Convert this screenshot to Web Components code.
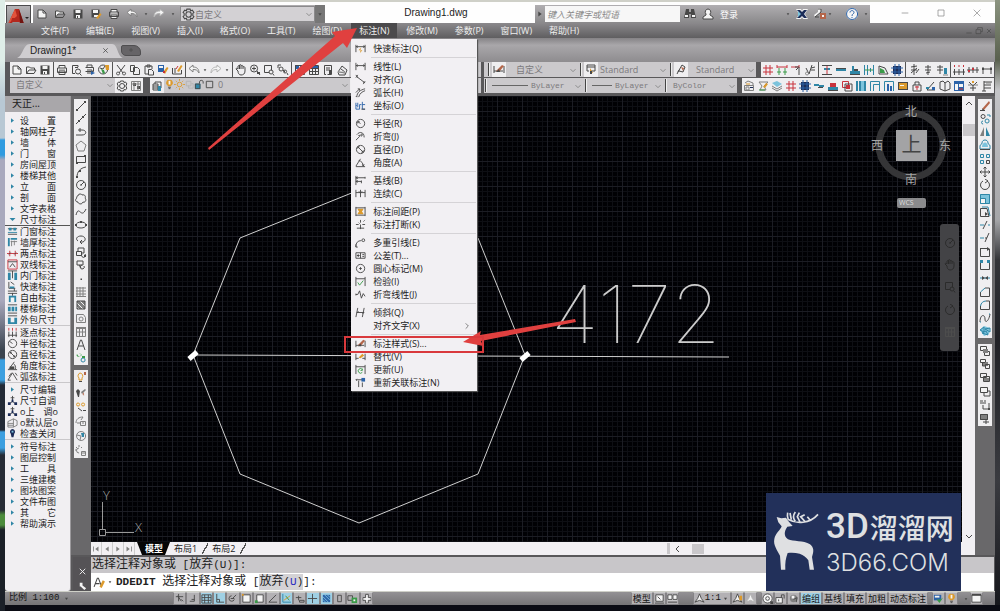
<!DOCTYPE html>
<html lang="zh-CN">
<head>
<meta charset="utf-8">
<title>Drawing1.dwg</title>
<style>
html,body{margin:0;height:100%;overflow:hidden}
body{font:9px/13px "Open Sans","Noto Sans CJK SC",sans-serif;color:#222;background:#0b0c14}
</style>
</head>
<body>
<cad-app></cad-app>
<script>
const COL={k:'#484848',g:'#808080',l:'#b4b4b4',b:'#2b62a8',t:'#2f86a6',c:'#7cc3dc',r:'#c8323c',y:'#dc9a2c',w:'#f4f4f4',n:'#3a9a48',d:'#1c2c58',o:'#b4664a'};
/* Icon parts: "<colour letter><! when filled> path", separated by ";" on a 12x12 grid */
const I={
new:'w!M2 2h5l3 3v5H2z;kM2 2h5l3 3v5H2zM7 2v3h3',
open:'w!M1 3h4l1 1h3v2H4L2 10H1z;kM1.5 9.500V3h3l1 1h4v2M1.500 9.500L4 6h7L9 9.500z',
save:'k!M1.500 1.500h9v9h-9z;w!M3.500 2h5v3h-5zM4 7h4v3H4z;k!M5 8h1v2H5z',
saveas:'k!M1.500 1.500h8v8h-8z;w!M3 2h5v3H3zM4 7h4v2H4z;y!M6 10l4-5 1.500 1.500L8 11z',
print:'w!M3 1h6v9H3z;kM3 4V1.500h6V4M1.500 4h9v4.500h-9zM3 7h6v3.500H3z;gM3 6h6',
preview:'kM8 3V1.500H2.500v8H5M5 3.500h3;kM8 5a2.500 2.500 0 1 1 0 5a2.500 2.500 0 1 1 0-5M10 10l1.500 1.500',
plot:'kM3 3V1h5v2M1.500 3.500h8v4h-8M3 6h5v3H3;b!M7 7l4 2-4 2z',
globe:'kM5 1a4.500 4.500 0 1 0 .1 9a4.500 4.500 0 1 0 0-9M2 4l3 1 2-3;n!M3 5l3 1 1 3-2 1z;y!M7 1h4v5H8z',
cut:'kM2 1l6 8M10 1L4 9M3 8a1.500 1.500 0 1 0 .1 0M9 8a1.500 1.500 0 1 0 .1 0',
copy:'w!M1 1h6v7H1z;kM1.500 1.500h4v6h-4zM4.500 3.500h4l2 2v5h-6z',
paste:'kM2 2h7v3M2 2v8h3M4 1h3v2H4z;kM5.500 5.500h3l2 2v3.500h-5z',
match:'b!M1 1h6v7H1z;w!M2 2h4v2H2z;y!M6 8l4-5 1.500 1L8 10z;r!M6 7h2v2H6z',
edit:'kM1.500 4v6h9V6M4 4v5;y!M6 7l4-6 1.500 1L8 8z;rM5 5l2-3',
undo:'w!M1 4.500L5 1v2c4 0 6 2 6 6-1.500-3-3-3.500-6-3.500V8z;gM1 4.500L5 1v2c4 0 6 2 6 6-1.500-3-3-3.500-6-3.500V8z',
redo:'w!M11 4.500L7 1v2C3 3 1 5 1 9c1.500-3 3-3.500 6-3.500V8z;lM11 4.500L7 1v2C3 3 1 5 1 9c1.500-3 3-3.500 6-3.500V8z',
caret:'k!M4 5h4L6 8z',
pan:'kM3 7L1 5c0-1 1-1 2 0V2c1-1 1.500 0 1.500 0V1C6 0 6 1 6 2c1-1 2-1 2 1 1-1 2 0 2 1v3c0 3-2 4-4 4S3 9 3 7zM4.500 2v3M6 2v3M8 3v2',
zoom:'kM5 1a3.500 3.500 0 1 0 .1 7a3.500 3.500 0 1 0 0-7M8 7l3 4M3 4.500h4M5 2.500v4;k!M8 8h3v2H8z',
zoomw:'kM1.500 1.500h7v5M1.500 1.500v7H6M8 6a2 2 0 1 0 .1 4a2 2 0 1 0 0-4M10 10l1 1.500',
zoomp:'kM4 3a2 2 0 1 0 .1 4a2 2 0 1 0 0-4M6 6l2 2M1 1h3M1 1v3M8 6a1.500 1.500 0 1 0 .1 3a1.500 1.500 0 1 0 0-3M10 9l1 2',
prop:'b!M1 1h4v4H1z;kM1.500 1.500h9v9h-9zM5 5h5M5 7.500h5M3 7.500h1;b!M6 2h4v2H6z',
grid:'kM1.500 1.500h9v9h-9zM1.500 4.500h9M1.500 7.500h9M4.500 1.500v9M7.500 1.500v9;b!M2 2h8v2H2z',
tool:'kM2.500 1.500h7v9h-4M2.500 1.500v9H4M4 4h4M4 6h4;k!M7 6h2v4H7z',
calc:'kM2 8l4-6 5 4-2 5H3zM3 8l6 1M5 5l4 3;lM2 8h7',
gear:'kM6 3.500a2.500 2.500 0 1 0 .1 5a2.500 2.500 0 1 0 0-5M4.500 1h3l.5 1.500L9.500 2 11 4 10 5v2l1 1-1.500 2-1.500-.5-.5 1.500h-3L4 9.500 2.500 10 1 8l1-1V5L1 4l1.500-2 1.500.5z',
ws:'k!M3 3h3v3H3zM7 6h3v3H7z;gM1.500 1.500h9v9h-9zM1 4h10M4 1v10M8 1v10',
layers:'kM2 4h5v6H2zM2 6h5M2 8h5M4 4V2h6v6H7;t!M7 6h3v5H7z',
bulb:'y!M6 1a3.200 3.200 0 0 0-2 6v1h4V7a3.200 3.200 0 0 0-2-6z;w!M5 2h2v4H5z;kM4.500 9h3M5 10.500h2',
sun:'yM6 3.500a2.500 2.500 0 1 0 .1 5a2.500 2.500 0 1 0 0-5M6 0v2M6 10v2M0 6h2M10 6h2M2 2l1 1M9 9l1 1M10 2L9 3M2 10l1-1',
vp:'lM2.500 2.500h5v5h-5zM5 7v3h5V5H8',
lock:'t!M1 5h6v6H1z;kM1.500 5.500h5v5h-5zM6 5V3c0-2 4-2 4 0v2',
sq:'kM2.500 2.500h7v7h-7z',
dimst:'kM1 3v7M11 3v7M1 8h9;o!M3 8L9 2l2 1-5 6z;k!M3 9l3-3 1 3z',
tblst:'kM2 2h8v6H6M2 2v6h2M2 4h8;y!M5 5l3 5H5z;k!M5 8h2v3H5z',
mlst:'kM3 9L7 2l3 2-2 5-4-1M2 11l2-4;o!M6 4l3 1-1 3z',
hashr:'rM4 1v10M8 1v10M1 4h10M1 8h10',
col2:'rM1 3h10M1 1v3M11 1v3;nM3 4v7M9 4v7M1 8h4M7 8h4',
tee:'rM1 3h8M9 1v3;kM5 3h4v8M6 6l2-2',
vee:'kM2 4l3 6M8 1L5 10M7 6h4M7 4l4-1;gM3 8a1.500 1.500 0 1 0 .1 0',
ibeam:'k!M1 1h10v1H1zM1 10h10v1H1z;t!M3 4h6v2H3z;rM6 2v8',
dash:'t!M1 5h10v2H1z;kM1 4.500h10',
wall1:'t!M1 7h10v3H1zM3 2h2v5H3z;k!M1 10h10v1H1zM5 5h4v2H5z',
win1:'tM1.500 1v10M10.500 1v10M4.500 1v10M7.500 4v4;nM2 6h8',
door:'kM2 2v8h9L8 4 2 2;n!M3 4l4 2 1 3H3z',
pillar:'d!M2 2h8v8H2z;bM4 0v12M8 0v12M0 4h12M0 8h12',
dimk:'kM6 0v11M3 3l6-1M3 6h6M3 9L9 4M8 9l3-4',
dimk2:'kM6 1v10M3 3h6M3 6h6M4 9l4-1',
dimk3:'kM4 1v9M1 3h6M1 6h6;t!M8 4h3v6H8z;gM7 11h5',
pts:'kM1.500 5v6M6 5v6M10.500 5v6M0 8h12;rM1.500 1v2M6 1v2M10.500 1v2',
pt2:'kM2 3v6M6 3v6M10 3v6M0 6h12;r!M5 4h2v2H5zM1 6h2v2H1z',
pt3:'kM2 3v7M10 3v7M2 5h8;k!M1 4h2v2H1zM9 4h2v2H9z',
a1:'gM2 3l3-2 5 2v3M1.500 5.500h9v5h-9zM3 7h3v3H3z;d!M7 7h3v1H7z;yM3 4h4',
a2:'gM2 2l3 4-2 4h6l-2-4 4-4z;y!M6 7l3-4 2 1-3 4z;nM2 10h6',
a3:'c!M1 3l5-2 5 3-5 3z;gM1 6l5 3 5-3M1 8l5 3 5-3',
a4:'t!M1 4h5v2H1zM6 5h5v2H6z;k!M5 7h5v1H5z',
a5:'r!M3 3h6v4H3z;t!M1 7h10v3H1z;k!M1 10h10v1H1z',
a6:'rM1.500 1.500h6v6h-6z;kM4 4h7v7H4z;r!M5 5h4v4H5z',
a7:'t!M1 1h2v10H1zM4 1h2v10H4zM9 1h2v10H9z;c!M6 1h3v10H6z',
a8:'tM1.500 11V1.500h9V11M4.500 11V4.500h6',
a9:'tM1.500 11V1.500h9V11;b!M4 4h2v7H4zM7 6h2v5H7z',
a10:'k!M1 2h10v8H1z;y!M2 3h8v6H2z;w!M3 5h4v1H3z',
a11:'kM2 5h8v6H2zM4 5V2h4v3;rM4 7h4M6 6v4',
a12:'kM2 10L9 2M2 10h8;b!M7 7h3v3H7z;t!M1 7h3v2H1z',
a13:'kM1 2l3-1 2 2v8L1 9zM6 3l3-2 2 2v6l-5 2',
a14:'b!M1 1h10v10H1z;w!M2 4h3v6H2zM6 4h4v3H6z;rM6 9h4',
a15:'kM2 2l4 4 4-4M6 5v6M3 8h6;gM1 5h10;y!M5 1h2v2H5z',
a16:'kM3 1v10M3 2h8M3 5h7M3 8h7M1 11h4;gM5 3h5',
line:'kM2 10L10 2;k!M1 9h2v2H1zM9 1h2v2H9z',
xline:'kM1 11L11 1;k!M3 7h2v2H3zM7 3h2v2H7z',
pline:'kM1 9h6c5 0 5-5 0-5H3M5 2v4',
poly:'gM6 1l5 4-2 6H3L1 5z',
rect:'kM1.500 3.500h9v6h-9z;k!M1 9h2v2H1zM9 2h2v2H9z',
arc:'kM2 11C2 6 5 2 11 1;k!M1 10h2v2H1zM4 4h2v2H4z',
circ:'kM6 1.500a4.500 4.500 0 1 0 .1 9a4.500 4.500 0 1 0 0-9M6 6l3-3M5 6h2',
cloud:'kM3 3c0-3 4-2 4-1 3-1 4 2 3 3 2 2 0 5-2 4-1 3-5 2-5 0-3 0-3-3-1-4-1-1 0-2 1-2z',
spl:'kM1 9C4-2 6 14 11 3',
ell:'kM6 3a5 3 0 1 0 .1 6a5 3 0 1 0 0-6;k!M5 2h2v2H5zM0 5h2v2H0zM10 5h2v2h-2z',
earc:'kM3 8c-3-2-1-5 3-5s6 4 2 6H5M7 7L5 9l2 2',
blk:'kM3 5V2h6v5H7M1.500 5.500h5v4h-5zM7 8a2 2 0 1 0 3 0;k!M9 9h2v2H9z',
blk2:'kM2 2h6v4H2zM7 6a2 2 0 1 0 2 1M4 6l2 3',
dot:'k!M5.500 5.500h1.500v1.500H5.500z',
hat:'gM1 2h10M1 5h10M1 8h10M2 1v10M5 1v10M8 1v10M1 10.500h10',
hat2:'g!M2 2h8v8H2z;wM1 3l8 8M4 1l7 7M1 7l4 4;kM2 2h8v8H2z',
reg:'gM1.500 2.500h7l2 3v5h-9zM6 5a2 2 0 1 0 .1 4a2 2 0 1 0 0-4',
tab:'gM1.500 1.500h9v9h-9zM1.500 6h9M4.500 3v8M7.500 3v8;g!M1 1h10v2H1z',
txt:'kM2 11L5.500 1h1L10 11M3.500 7h5',
adds:'n!M2 2a2 2 0 1 0 2-1l3 2-3 2z;tM8 6a2 2 0 1 0 .1 4a2 2 0 1 0 0-4;n!M7 4h3v2H7z',
li1:'yM5 2a3 3 0 0 0-1 5v2h3V7a3 3 0 0 0-2-5z;kM4 10.500h3;o!M9 1h2v3H9z',
li2:'k!M3 3l2 2-1 6H3L1 5z;g!M6 6l4-3 1 1-4 4z;oM9 7a1 1 0 1 0 .1 2',
li3:'yM3 2a1.500 1.500 0 1 0 .1 3a1.500 1.500 0 1 0 0-3M8 2a1.500 1.500 0 1 0 .1 3a1.500 1.500 0 1 0 0-3;kM3 7l4 3;k!M8 9h3v1H8z',
li4:'gM1 8c0-4 3-6 7-6L6 5M5.500 6.500h5v4h-5zM7 8h2M2 8h3',
li5:'gM6 1.500a4.500 4.500 0 1 0 .1 9a4.500 4.500 0 1 0 0-9;t!M6 3h3v4H7z;gM2 5l4 1-1 4',
li6:'gM4 3a2 2 0 1 0 .1 5M4 0v2M0 5h2M1 2l1 1M7 2L6 3M6.500 6.500h4v4h-4zM7 8h3',
erase:'o!M3 9L10 1l1 2-6 7z;kM1 10.500h5M3 9l2 1',
cpy2:'kM4 1.500a2 2 0 1 0 .1 4a2 2 0 1 0 0-4;tM8 6a2 2 0 1 0 .1 4a2 2 0 1 0 0-4M4 8a1.500 1.500 0 1 0 .1 3M8 2h3v2',
mir:'g!M5 1v9H1z;t!M7 1v9h4z',
offs:'tM1 10V7c0-2 2-1 2-3 0-4 6-4 6 0 0 2 2 1 2 3v3z;c!M3 8c0-6 6-6 6 0z;kM1 10.500h10',
arr:'tM1.500 1.500h3v3h-3zM7.500 1.500h3v3h-3zM1.500 7.500h3v3h-3z;kM7.500 7.500h3v3h-3z',
mov:'kM6 1v10M1 6h10M4.500 2.500L6 1l1.500 1.500M4.500 9.500L6 11l1.500-1.500M2.500 4.500L1 6l1.500 1.500M9.500 4.500L11 6 9.500 7.500',
rot:'kM8 2a4.500 4.500 0 1 1-4 0M6 0l3 2-3 2',
scl:'c!M1 1h10v10H1z;tM1.500 1.500h9v9h-9z;w!M2 6h4v4H2z;tM1.500 5.500h5v5',
str:'kM1.500 2.500v8H10L8 2.500z;tM3 1h6l2 9;k!M6 6l3 2-3 2z',
trm:'tM1 6h4M9 6h2;kM4 10l4-8',
ext:'tM1 6h4;kM6 10l4-9M6 6h2',
brk:'kM1.500 3v7.500h9V3;kM1 2.500h7;k!M8 1l3 2-3 2z',
brk2:'kM1.500 4v6.500h9V4;t!M1 1h3v3H1zM8 1h3v3H8z',
join:'tM1 6h10;k!M3 4l3 2-3 2zM9 4L6 6l3 2z',
cha:'kM1.500 6v4.500h9V2H6;tM1.500 6L6 2',
fil:'kM1.500 7v3.500h9V2H7;tM1.500 7C2 4 4 2 7 2',
bln:'kM1 10c0-8 5-8 5-3s4 2 5-5;tM1 10h1M10 2h1',
exp:'c!M1 5l4-4 6 2-1 6-5 2z;tM1 5l4-3v5zM6 4l5-1v4zM3 8l4-2 2 4z',
or1:'w!M1 1h7v5H1z;kM1.500 1.500h6v4h-6zM5.500 6.500h5v4h-5z;g!M4 4h5v4H4z',
or2:'g!M4 4h5v4H4z;w!M1 1h6v4H1z;kM1.500 1.500h5v3h-5zM6.500 6.500h4v4h-4zM3.500 4v4H6',
or3:'kM1.500 1.500h6v4h-6zM4.500 4.500h6v5h-6z;g!M5 6h5v3H5z',
or4:'w!M1 1h7v5H1z;kM1.500 1.500h7v5h-7zM5 7v3h6V5H9',
or5:'kM1 2h3M5 2h2M1 4h6M4 6v4h6V4;k!M9 9h2v2H9z',
or6:'g!M1 1h8v6H1z;kM1.500 1.500h7v5h-7zM4 9h6M7 6v5',
mq:'kM1 2v8M11 2v8M1 4h10M3 3L1.500 4 3 5M9 3l1.500 1L9 5;y!M6.500 5L4 8h2l-.5 3L8 8H6z',
ml:'kM1 2v8M11 2v8M1 5h10M3 4L1.500 5 3 6M9 4l1.500 1L9 6',
mal:'kM2 3l8 6M1 4l2-3M9 11l2-3M1 1l2 3M9 9h2',
marc:'kM2 11C2 6 6 3 11 2M4 11C5 7 8 5 11 4M1 10l1 1M1 6l4-4H3M5 2v2',
mord:'bM1 3v7h4M3 3v5M5 10V5h2M8 2v8h3M8 5h3M1 6h1;kM7 10h4',
mrad:'kM6 1.500a4.500 4.500 0 1 0 .1 9a4.500 4.500 0 1 0 0-9M6 6L3 4M3 6V4h2',
mjog:'kM2 4c3-4 8-3 8 3M1 10l4-4-1-1 4-1M7 3l1 1-1 2',
mdia:'kM6 1.500a4.500 4.500 0 1 0 .1 9a4.500 4.500 0 1 0 0-9M3 3l6 6M3 5V3h2M9 7v2H7',
mang:'kM1 10.500h10M1 10l5-8M4 4c3 0 5 3 5 6M8 8l1 2 1-2',
mbas:'kM1 1v10M1 3h10M1 7h6M11 2v2M7 6v3M3 2L1 3l2 1M3 6L1 7l2 1',
mcon:'kM1 2v8M6 2v8M11 2v8M1 5h10M4 4l2 1M8 4L6 5',
mspc:'y!M3 3h6v1L7.500 6 9 8v1H3V8l1.500-2L3 4z;kM1 1v10M11 1v10M1 2h10M1 10h10',
mbrk:'kM6 1v3M6 6v5M1 6h3M8 6h3M2 10h8M4 4l1 1;gM9 3l2-2',
mlead:'kM1 11C1 6 3 4 7 4M9 2a1.500 1.500 0 1 0 .1 3a1.500 1.500 0 1 0 0-3M1 8v3h2',
mtol:'kM1 3h10v6H1z;k!M2 5.500h3v1H2zM3 4.500h1v3H3z;kM6 3v6M8 5h2M8 7h2',
mcen:'kM6 1.500a4.500 4.500 0 1 0 .1 9a4.500 4.500 0 1 0 0-9M4.500 6h3M6 4.500v3',
mins:'kM1 1v10M11 1v10M1 3h10;nM3 7l2 3 4-5',
mjl:'kM1 6h2l2-4 2 8 2-5 2 3M1 5v2',
mobl:'kM3 1L1 11M10 1L8 11M2 6h8M4 5L2 6M8 7l2-1',
mrep:'kM1 3v7M11 3v7M1 8h3M8 8h3;y!M4 7l4-4 2 2-4 3z',
mupd:'kM1 1v10M11 1v10M1 3h10;nM8 6a2.500 2.500 0 1 0 0 3M8 5v2H6',
mrea:'kM1 3h7M2 2L1 3l1 1M4 4v7M8 6v5;b!M7 1h4v4H7z',
sub:'kM4 2l4 4-4 4',
p1:'kM1 3h10M1 9h10;t!M2 2h3v3H2zM7 2h3v3H7z;tM1 7h10',
p2:'t!M1 1h2v9H1zM4 1h7v2H4z;gM4 5h7M5 4v6M8 4v5',
p3:'rM0 6h12M3 3v6M9 3v6;kM2 7l2-2M8 7l2-2',
p4:'rM1 1h10v10H1z;kM1 3h10M3 9l3-4 3 4',
p5:'t!M1 3h3v8H1zM8 3h3v8H8z;kM1 1h10M6 1v8',
p6:'kM2 1v7h7M4 1l4 3M1 11h10M8 8v3;t!M3 6h5v2H3z',
p7:'t!M2 4h8v7H2z;w!M4 6h4v5H4z;kM1 1.500h10M6 1v3',
p8:'t!M1 4h3v5H1zM5 4h3v5H5zM9 4h2v5H9z;kM1 2h10M1 11h10',
p9:'t!M1 4h3v7H1zM8 4h3v7H8zM3 9h6v2H3z;kM1 2h10',
p10:'kM1 9h10M2 11V5M6 11V5M10 11V5;rM2 1v3M6 1v3M10 1v3',
p11:'kM6 1.500a4.500 4.500 0 1 0 .1 9a4.500 4.500 0 1 0 0-9M6 6L2.500 3.500',
p12:'kM6 1.500a4.500 4.500 0 1 0 .1 9a4.500 4.500 0 1 0 0-9M3 3l6 6;k!M3 3h2v2H3zM7 7h2v2H7z',
p13:'kM1 10.500h10M2 10l6-8M7 4c2 1 3 4 2 6;k!M3 7h5v3H3z',
p14:'kM1 10L6 2l5 8M2 6l3-4M1 10h3M9 2l2 3',
p15:'kM6 1v6M6 7l-4 3M6 7l4 3M4 3h4;d!M1 8h3v3H1zM8 8h3v3H8zM5 5h2v3H5z',
p16:'gM1 5l6-3 4 2v5l-4 2H1zM1 7h6M1 9h6M7 2v9',
p17:'d!M6 1a3 3 0 0 0-2 5l1 4h2l1-4a3 3 0 0 0-2-5z;c!M5 3h2v2H5z',
tri:'t!M4 3l4 3-4 3z',trid:'t!M2 4h8L6 8z',
s1:'kM2 4h8M5 1v8M4 3l4 6M8 7l2 2',s2:'kM8 2v7H3M5 7h3',s3:'kM1 2h10v9H1zM1 5h10M1 8h10M4 2v9M8 2v9',
s4:'kM3 1v9h8M3 7h3v3',s5:'kM5 3a3 3 0 1 0 3 4M6 6l4-4M4 6h4',s6:'w!M2 2h8v8H2z;kM2 2h8v8H2z;y!M1 1h2v2H1z',
s7:'w!M3 2h7v8H3z;kM3 2h7v8H3z;n!M1 8h3v3H1z',s8:'kM10 2L2 10h9',s9:'tM2 1v9h9;yM3 8l7-5;nM5 3l4 5',
s10:'kM2 5h6M5 3v5M6 8h5v2H6z',s11:'kM6 1v10M1 6h10',s12:'b!M2 2h8v8H2z;cM2 4l6 6M2 7l3 3M4 2l6 6M7 2l3 3',
s13:'kM4 2.500h4v7H4z',s14:'kM1 3h5v5H1z;n!M5 5h6v6H5z;w!M7 7h2v2H7z',s15:'w!M5 1h3v4h4v3H8v4H5V8H1V5h4z;kM5 1.500h3V5h3v3H8v3H5V8H2V5h3z',
lay:'w!M2 2h8v7H2z;kM2 2h8v7H2zM1 11h10M4 4l3 3',lay2:'w!M1 2h10v6H1z;kM1 2h4.500v5H1zM6.500 2H11v5H6.500zM1 10h10',
ann:'w!M6 1l2 5 3 4-5-2-5 2 3-4z;kM6 1l2 5 3 4-5-2-5 2 3-4z',
anny:'w!M6 1l2 5 3 4-5-2-5 2 3-4z;kM6 1l2 5 3 4-5-2-5 2 3-4z;y!M8 3h3v5H8z',
anng:'w!M6 1l2 5 3 4-5-2-5 2 3-4z;lM6 1l2 5 3 4-5-2-5 2 3-4z',
gearw:'w!M6 1a5 5 0 1 0 .1 10a5 5 0 1 0 0-10;kM6 1a5 5 0 1 0 .1 10a5 5 0 1 0 0-10M6 4a2 2 0 1 0 .1 4a2 2 0 1 0 0-4;k!M9 9h3v3H9z',
lockw:'w!M1 5h7v6H1z;kM1 5h7v6H1zM7 5V2h3v4M4 7v2',ball:'g!M6 2a4 4 0 1 0 .1 8a4 4 0 1 0 0-8;w!M4 3h3v3H4z;kM6 7l4-2-1 5',
scr:'b!M1 2h8v6H1z;n!M4 7l3 4 4-6-3 2z;w!M2 3h5v2H2z',clean:'w!M1 2h10v8H1z;kM1 2h10v8H1z;k!M1 1h10v2H1z',
bino:'k!M2 1h3v3h2V1h3l2 9H7V6H5v4H0z;w!M1 7h3v2H1zM8 7h3v2H8z',user:'w!M6 1a3 3 0 0 0-2 5v1L1 9v2h10V9L8 7V6a3 3 0 0 0-2-5z;kM6 1a3 3 0 0 0-2 5v1L1 9v2h10V9L8 7V6a3 3 0 0 0-2-5z',
exch:'w!M0 1h5l1 2 1-2h5L9 6l3 5H7L6 9l-1 2H0l3-5z;d!M1 2h3l2 2 2-2h3L8 6l3 4H8L6 8l-2 2H1l3-4z;c!M2 3l3 3-3 3z',
app:'w!M4 0h3v3l-1 2-5 4-1-2 4-3z;kM4 1h3v3L1 9M1 9h4;o!M6 5h6v6H6z;w!M8 7h2v2H8z',
help:'w!M6 0a6 6 0 1 0 .1 12a6 6 0 1 0 0-12;bM6 .5a5.500 5.500 0 1 0 .1 11a5.500 5.500 0 1 0 0-11;bM4 4.500c0-2.500 4-2.500 4 0C8 6 6 5.500 6 8M6 9v1',
right:'k!M4 3l4 3-4 3z',first:'gM3 3v6;g!M9 3L5 6l4 3z',prev:'g!M8 3L4 6l4 3z',next:'g!M4 3l4 3-4 3z',last:'gM9 3v6;g!M3 3l4 3-4 3z',
up:'kM3 8l3-3 3 3',down:'kM3 5l3 3 3-3',left:'kM7 3L4 6l3 3',chev:'gM3 5l3 3 3-3',
min:'kM2 9h8',rest:'kM4 3V1h7v6H9M1.500 4h7v6h-7z',x:'kM3 3l6 6M9 3l-6 6',gmin:'gM1 6h10',gmax:'gM1.500 1.500h9v9h-9z',gx:'gM1 1l10 10M11 1L1 11',
plus:'kM6 3v6M3 6h6',cmd:'kM1 10L4 2h1l3 8M2 7h4;y!M6 10l3-6 2 1-3 6z',wrench:'w!M3 3h3v3l4 3-2 2-4-4H3z',wx:'wM3 3l6 6M9 3l-6 6'
};
const svg=(n,s=12)=>`<svg width="${s}" height="${s}" viewBox="0 0 12 12" aria-hidden="true">`+(I[n]||'').split(';').map(p=>{const c=COL[p[0]],f=p[1]==='!';return `<path d="${p.slice(f?2:1)}" fill="${f?c:'none'}" stroke="${f?'none':c}"/>`}).join('')+'</svg>';
const BASE='*{box-sizing:border-box}svg{display:block;flex:none}button{font:inherit;color:inherit;border:0;padding:0;margin:0;background:none;display:flex;align-items:center;justify-content:center}a{color:inherit;text-decoration:none}';
const def=(tag,css,html)=>customElements.define(tag,class extends HTMLElement{
  constructor(){super();this.attachShadow({mode:'open'})}
  connectedCallback(){this.shadowRoot.innerHTML=`<style>${BASE}${css}</style>`+(typeof html==='function'?html(this):html)}
});
const at=(e,n,d='')=>e.getAttribute(n)??d;

def('cad-icon',':host{display:block;flex:none}',e=>svg(at(e,'name'),at(e,'size','12')));

/* A strip of icon buttons; "|" is a divider, ":" a small drop-down arrow */
def('cad-tools',`:host{display:flex;background:#efeef0;flex:none}
.v{width:3px;background:linear-gradient(90deg,transparent 1px,#555 1px,#555 2px,transparent 2px)}
button{width:14px;height:15px;overflow:hidden}button.c{width:8px}
:host([vertical]){display:grid;grid-auto-rows:1fr;width:14px}
:host([vertical]) button{width:14px;height:auto;min-height:0}`,
e=>at(e,'icons').split(' ').map(n=>n==='|'?'<i class="v"></i>':n===':'?`<button class="c" aria-label="更多">${svg('caret',8)}</button>`:`<button aria-label="${n}">${svg(n)}</button>`).join(''));

def('cad-combo',`:host{display:flex;align-items:center;background:#cbc9cc;height:13px;color:#7b797c;min-width:0}
select{appearance:none;border:0;background:none;color:inherit;font:inherit;padding:0;margin:0;flex:1;min-width:0;height:13px;outline:0}
.ln{width:var(--ln,36px);height:1px;background:#666;flex:none;margin:0 3px}`,
e=>`<slot></slot>${e.hasAttribute('line')?'<i class="ln"></i>':''}<select aria-label="${at(e,'label')}"><option>${at(e,'value')}</option></select>${svg('chev',10)}`);

def('cad-title',`:host{display:flex;height:21px;background:#fefefe;align-items:flex-end;position:relative}
.app{position:absolute;left:1px;top:3px;width:25px;height:25px;background:linear-gradient(#b5b3b6,#858386);border:1px solid #4c4b4d;z-index:2}
.q{margin-left:28px;height:18px;width:292px;background:linear-gradient(#aeacaf,#8a898b);display:flex;align-items:center;padding-left:3px;gap:6px}
.q button{width:12px}.q .s{width:7px;margin:0 -2px}
cad-combo{flex:1;height:16px;border:1px solid #8b8a8c;background:#d3d1d4;padding-left:1px}
.q .drop{background:#777;width:10px;height:18px;margin-left:-6px}
h1{flex:1;margin:0;padding-left:12px;text-align:center;font:10px/21px "Liberation Sans","Noto Sans CJK SC",sans-serif;color:#222}
.s2{width:335px;height:18px;background:linear-gradient(#b0aeb1,#8a898b);display:flex;align-items:center}
input{width:135px;height:16px;border:0;background:#f7f7f7;padding:0 2px;font:italic 9px "Noto Sans CJK SC",sans-serif;color:#666;margin:0}
input::placeholder{color:#888;opacity:1}
.lg{color:#fff;display:flex;gap:6px;align-items:center;margin-left:4px}
.w{width:125px;display:flex;justify-content:space-between;padding:0 14px 0 31px;align-self:center}`,
`<button class="app" aria-label="应用程序"><svg width="23" height="23" viewBox="0 0 23 23"><path d="M1 18L8 3h4l5 15-4-1-2-3H7l-2 3z" fill="#b3281e"/><path d="M8 3l2 7-9 8z" fill="#e2533c"/><path d="M12 3l5 15-4-1z" fill="#701410"/><path d="M18 11h4l-2 2z" fill="#222"/><path d="M5 12h7v4H4z" fill="#b3281e"/></svg></button>
<div class="q">${['new','open','save','saveas','print','undo'].map(n=>`<button aria-label="${n}">${svg(n)}</button>`).join('')}<button class="s" aria-label="更多">${svg('caret',8)}</button><button aria-label="redo">${svg('redo')}</button><button class="s" aria-label="更多">${svg('caret',8)}</button>
<cad-combo value="自定义" label="工作空间"><cad-icon name="gear" size="13"></cad-icon></cad-combo><button class="drop" aria-label="自定义">${svg('caret',10)}</button></div>
<h1>Drawing1.dwg</h1>
<div class="s2"><button aria-label="展开">${svg('right',10)}</button><input aria-label="搜索" placeholder="键入关键字或短语"><div class="lg"><button aria-label="搜索">${svg('bino')}</button>
<button aria-label="用户">${svg('user')}</button><span>登录</span></div><span style="flex:1"></span>${svg('caret',8)}<cad-icon name="exch" style="margin:0 6px 0 4px"></cad-icon><cad-icon name="app"></cad-icon>${svg('caret',8)}<cad-icon name="help" style="margin:0 4px 0 12px"></cad-icon>${svg('caret',8)}</div>
<div class="w"><button aria-label="最小化">${svg('gmin',8)}</button><button aria-label="最大化">${svg('gmax',8)}</button><button aria-label="关闭">${svg('gx',8)}</button></div>`);

const MENU=[['mq','快速标注(Q)'],0,['ml','线性(L)'],['mal','对齐(G)'],['marc','弧长(H)'],['mord','坐标(O)'],0,['mrad','半径(R)'],['mjog','折弯(J)'],['mdia','直径(D)'],['mang','角度(A)'],0,['mbas','基线(B)'],['mcon','连续(C)'],0,['mspc','标注间距(P)'],['mbrk','标注打断(K)'],0,['mlead','多重引线(E)'],['mtol','公差(T)...'],['mcen','圆心标记(M)'],['mins','检验(I)'],['mjl','折弯线性(J)'],0,['mobl','倾斜(Q)'],['','对齐文字(X)',1],0,['dimst','标注样式(S)...'],['mrep','替代(V)'],['mupd','更新(U)'],['mrea','重新关联标注(N)']];
def('cad-menu',`:host{display:block;width:126px;background:#f2f0f3;padding:3px 0 2px;color:#222;box-shadow:1px 1px 1px #555}
button{width:100%;height:13px;justify-content:flex-start;line-height:13px;padding:0 6px 0 4px}
.i{width:12px;margin-right:6px}span{flex:1;text-align:left;white-space:nowrap}
hr{border:0;height:1px;background:#d5d3d6;margin:2px 1px 2px 20px}`,
MENU.map(m=>m?`<button role="menuitem"><i class="i">${m[0]?svg(m[0],11):''}</i><span>${m[1]}</span>${m[2]?svg('sub',8):''}</button>`:'<hr>').join(''));

def('cad-menubar',`:host{display:flex;gap:1px;height:15px;background:linear-gradient(#8b898c,#5f5e60);padding-left:28px;color:#eee;position:relative;z-index:5}
.m{position:relative}.m>button{height:15px;padding:0 8px;line-height:15px;white-space:nowrap}
.on>button{background:#4b4a4c}
cad-menu{position:absolute;left:0;top:16px}
.e{margin-left:auto;display:flex;align-items:center;gap:2px;padding-right:2px}`,
['文件(F)','编辑(E)','视图(V)','插入(I)','格式(O)','工具(T)','绘图(D)','标注(N)','修改(M)','参数(P)','窗口(W)','帮助(H)'].map(t=>`<div class="m${t==='标注(N)'?' on':''}"><button>${t}</button>${t==='标注(N)'?'<cad-menu role="menu"></cad-menu>':''}</div>`).join('')+`<div class="e">${['min','rest','x'].map(n=>`<button aria-label="${n}">${svg(n,8)}</button>`).join('')}</div>`);

def('cad-tabs',`:host{display:flex;height:24px;background:linear-gradient(#858386,#a9a7aa 30%,#8e8c8f);align-items:center;padding:3px 0 3px 12px;font:10px/15px "Liberation Sans",sans-serif}
.t{position:relative;display:flex;align-items:center;height:15px;width:106px;padding:0 13px}
.t>svg.bg{position:absolute;left:0;top:0}.t span{position:relative;flex:1;color:#222}.t button{position:relative}
.p{width:20px;height:11px;background:#666467;border:1px solid #4f4e50;border-radius:2px 7px 2px 5px;margin-left:-2px}`,
`<div class="t"><svg class="bg" width="106" height="15"><path d="M0 15C6 13 6 1 13 1h82c6 0 5 12 11 14z" fill="#cfcdd0"/></svg><span>Drawing1*</span><button aria-label="关闭">${svg('x',9)}</button></div><button class="p" aria-label="新建">${svg('plus',8)}</button>`);

def('cad-ribbon',`:host{display:block;background:#59585a;padding-bottom:3px}
.r{display:flex;height:15px;margin-bottom:1px;padding:0 1px 0 5px;align-items:center}.r+.r{margin:0}
.a{width:471px;background:#cbc9cc;display:flex;flex:none}.st{flex:1;display:flex;align-items:center;gap:2px;background:#cbc9cc;padding-left:4px;margin:0 5px 0 3px;height:15px;min-width:0}
.st cad-combo{flex:1}.b{border-left:1px solid #444;height:13px;width:2px;background:#eee}
.bg{background:#efeef0;width:14px;height:15px;padding:1px}
.mono{font:8px/13px "Liberation Mono",monospace;padding-left:1px}.c1{width:133px}.c1 cad-combo{flex:1;padding-left:6px}.l{flex:1;background:#cbc9cc;margin-left:7px;display:flex;width:0}
.l cad-combo{width:186px;flex:none}.l cad-icon{margin-right:-1px}`,
`<div class="r"><div class="a"><cad-tools icons="new open save | print preview plot globe | cut copy paste match edit | undo : redo : | pan zoom zoomw zoomp | prop grid tool calc"></cad-tools></div>
<div class="st"><i class="b"></i><cad-icon class="bg" name="dimst"></cad-icon><cad-combo value="自定义" label="标注样式" style="padding-left:8px;flex:none;width:70px"></cad-combo><i class="b"></i><cad-icon class="bg" name="tblst"></cad-icon><cad-combo value="Standard" label="表格样式" style="flex:none;width:68px"></cad-combo><i class="b"></i><cad-icon class="bg" name="mlst"></cad-icon><cad-combo value="Standard" label="多重引线样式" style="padding-left:6px"></cad-combo></div>
<cad-tools icons="hashr col2 tee vee | ibeam dash wall1 win1 door pillar | dimk dimk2 dimk3 | pts pt2 pt3"></cad-tools></div>
<div class="r"><div class="a" style="background:none"><div class="a c1"><cad-combo value="自定义" label="工作空间"></cad-combo><cad-tools icons="gear ws"></cad-tools></div><div class="l"><cad-tools icons="layers"></cad-tools><cad-combo value="0" label="图层"><cad-icon name="bulb" size="11"></cad-icon><cad-icon name="sun" size="11"></cad-icon><cad-icon name="vp" size="11"></cad-icon><cad-icon name="lock" size="11"></cad-icon><cad-icon name="sq" size="11"></cad-icon><i style="width:4px"></i></cad-combo><cad-tools icons="layers layers"></cad-tools></div></div>
<div class="st mono"><i class="b"></i><cad-combo line value="ByLayer" label="线型" style="flex:none;width:94px"></cad-combo><i class="b"></i><cad-combo line value="ByLayer" label="线宽" style="--ln:20px;flex:none;width:74px"></cad-combo><i class="b"></i><cad-combo value="ByColor" label="打印样式" style="padding-left:4px"></cad-combo></div>
<cad-tools icons="a1 a2 a3 hashr pillar a4 a5 a6 a7 a8 a9 a10 a11 a12 a13 a14 a15 a16"></cad-tools></div>`);

const PAL=[['tri','设　　置'],['tri','轴网柱子'],['tri','墙　　体'],['tri','门　　窗'],['tri','房间屋顶'],['tri','楼梯其他'],['tri','立　　面'],['tri','剖　　面'],['tri','文字表格'],['trid','尺寸标注'],1,['p1','门窗标注'],['p2','墙厚标注'],['p3','两点标注'],['p4','双线标注'],['p5','内门标注'],['p6','快速标注'],['p7','自由标注'],['p8','楼梯标注'],['p9','外包尺寸'],0,['p10','逐点标注'],['p11','半径标注'],['p12','直径标注'],['p13','角度标注'],['p14','弧弦标注'],0,['tri','尺寸编辑'],['p15','尺寸自调'],['p15','o上　调o'],['p16','o默认层o'],['p17','检查关闭'],0,['tri','符号标注'],['tri','图层控制'],['tri','工　　具'],['tri','三维建模'],['tri','图块图案'],['tri','文件布图'],['tri','其　　它'],['tri','帮助演示']];
def('cad-palette',`:host{display:flex;flex-direction:column;width:66px;background:#f1eff2;border-right:1px solid #9b999c;border-radius:0 0 3px 3px;flex:none;color:#1c1c1c}
h2{margin:0 0 3px;height:16px;background:#a9a7aa;font-size:10px;line-height:15px;font-weight:400;padding-left:7px}
button{width:100%;height:11px;justify-content:flex-start;line-height:11px;padding-left:2px}
span{margin-left:2px;white-space:pre}.tri{margin:0 1px}hr{border:0;height:1px;background:#c9c7ca;margin:0 0 1px;flex:none;width:100%}hr.d{background:#555;margin:0}`,
`<h2>天正...</h2>`+PAL.map(m=>m===1?'<hr class="d">':m===0?'<hr>':`<button>${m[0].startsWith('tri')?svg(m[0],9).replace('<svg','<svg class="tri"'):svg(m[0],11)}<span>${m[1]}</span></button>`).join(''));

def('cad-side',`:host{display:block;background:#69686a;width:20px;flex:none;padding-top:3px}
cad-tools{margin:0 auto}`,
e=>at(e,'side')==='left'?`<cad-tools vertical style="height:266px" icons="line xline pline poly rect arc circ cloud spl ell earc blk blk2 dot hat hat2 reg tab txt adds"></cad-tools><cad-tools vertical style="height:88px;margin-top:5px" icons="li1 li2 li3 li4 li5 li6"></cad-tools>`
:`<cad-tools vertical style="height:239px" icons="erase cpy2 mir offs arr mov rot scl str trm ext brk brk2 join cha fil bln exp"></cad-tools><cad-tools vertical style="height:82px;margin-top:6px" icons="or1 or2 or3 or4 or5 or6"></cad-tools>`);

def('cad-canvas',`:host{display:block;flex:1;min-width:0;background:#010104;position:relative;overflow:hidden}
svg.d{position:absolute;inset:0;width:100%;height:100%}
.cube{position:absolute;right:15px;top:8px;width:72px;height:108px;color:#a5a5a5}
.cube svg{position:absolute;left:0;top:5px}
.cube span{position:absolute;font-size:12px;line-height:16px;width:16px;text-align:center}
.n{left:28px;top:0}.s{left:28px;top:68px}.w{left:-6px;top:34px}.e{left:62px;top:34px}
.cube .u{left:21px;top:26px;width:31px;height:31px;background:#a3a3a5;color:#444;font-size:20px;line-height:30px}
.wcs{position:absolute;left:22px;top:94px;width:29px;height:10px;border-radius:2px;background:#8a8a8c;color:#ddd;font-size:7px;line-height:10px;padding-left:2px;justify-content:flex-start}
.nav{position:absolute;right:3px;top:128px;width:19px;height:127px;border-radius:3px;background:#434346;display:flex;flex-direction:column;align-items:center;justify-content:space-around;padding:8px 0}
.nav svg{filter:brightness(.6)}`,
`<svg class="d"><defs><pattern id="g" width="25" height="25" patternUnits="userSpaceOnUse" x="6" y="15"><path d="M5.500 0v25M10.500 0v25M15.500 0v25M20.500 0v25M0 5.500h25M0 10.500h25M0 15.500h25M0 20.500h25" stroke="#0e0f14"/><path d="M.5 0v25M0 .5h25" stroke="#1c1d24"/></pattern></defs>
<rect width="100%" height="100%" fill="url(#g)"/>
<g fill="none" stroke="#cfcfcf"><path d="M102 259L149 142 268 94 387 142 434 259 387 378 268 427 149 378zM102 259L638 261"/>
<path d="M98 263l8-7M430 264l8-7" stroke="#fff" stroke-width="5"/><path d="M8.500 433.500h6v6h-6zM11.500 433v-27M14 436.500h29" stroke="#999"/></g>
<text x="460" y="247" font-family="Inter" font-weight="100" font-size="80" fill="#ccc">4172</text>
<g fill="#aaa" font-family="Open Sans" font-weight="300" font-size="13"><text x="12" y="404">Y</text><text x="44" y="436">X</text></g></svg>
<div class="cube"><svg width="72" height="72"><circle cx="36" cy="36" r="32" fill="none" stroke="#353537" stroke-width="7"/></svg><span class="n">北</span><span class="s">南</span><span class="w">西</span><span class="e">东</span><span class="u">上</span><button class="wcs">WCS</button></div>
<div class="nav">${['circ','pan','zoomw','rot','tab'].map(n=>svg(n)).join('')}</div>`);

def('cad-vscroll',`:host{display:flex;flex-direction:column;width:13px;background:#f2f0f3;flex:none;align-items:center}
i{width:12px;height:12px;background:#c9c7ca;margin:15px 0 auto}button{height:13px}`,
`<button aria-label="上">${svg('up')}</button><i></i><button aria-label="下">${svg('down')}</button>`);

def('cad-layouts',`:host{display:flex;height:13px;background:#f2f0f3;align-items:center;line-height:13px;font-size:9px}
nav{display:flex;padding:0 2px 0 0}nav button{width:11px;height:13px;border-right:1px solid #ccc}
a{padding:0 5px 0 4px;white-space:nowrap}.on{background:#050505;color:#fff;padding:0 7px 0 8px;clip-path:polygon(0 0,100% 0,calc(100% - 5px) 100%,5px 100%);font-weight:700}
i{width:6px;height:11px;background:linear-gradient(120deg,transparent 45%,#555 45%,#555 58%,transparent 58%);flex:none}
.h{display:flex;margin-left:auto;width:308px;align-items:center}.h b{width:3px;height:11px;background:#c9c7ca;margin-right:2px}.h u{width:12px;height:10px;background:#c9c7ca;margin-left:8px}`,
`<nav>${['first','prev','next','last'].map(n=>`<button aria-label="${n}">${svg(n,10)}</button>`).join('')}</nav><a class="on" href="#m">模型</a><a href="#l1">布局1</a><i></i><a href="#l2">布局2</a><i></i><div class="h"><b></b><button aria-label="左">${svg('left')}</button><u></u></div>`);

def('cad-command',`:host{display:flex;height:34px;font:12px/16px "Liberation Mono","Noto Sans CJK SC",monospace;color:#222;margin:0 1px 0 2px}
.h{width:18px;background:#555356;display:flex;flex-direction:column;align-items:center;justify-content:flex-end;gap:3px}
.b{flex:1;display:flex;flex-direction:column;min-width:0}.l{height:16px;background:#c8c6c9;padding-left:1px;white-space:pre;overflow:hidden}.i{height:18px;background:#fff;display:flex;align-items:center;padding-left:2px;white-space:pre}
s{text-decoration:none;font-size:11px}em{font-style:normal;background:#d4d2d5}u{text-decoration:none;color:#2a2ac0;font-size:11px}`,
`<div class="h">${svg('wx',11)}${svg('wrench',11)}</div><div class="b"><div class="l">选择注释对象或<s> [</s>放弃<s>(U)]:</s></div><div class="i">${svg('cmd',13)}${svg('caret',8)}<s style="margin-left:2px"><b>DDEDIT </b></s><span>选择注释对象或</span><s> [</s><em>放弃<s>(</s><u>U</u><s>)</s></em><s>]:</s></div></div>`);

def('cad-status',`:host{display:flex;height:13px;background:linear-gradient(#939194,#757476);align-items:center;line-height:13px;color:#151515;white-space:nowrap}
.sc{width:168px;padding-left:4px;display:flex;align-items:center;gap:3px;font:9px/13px "Liberation Mono","Noto Sans CJK SC",monospace}
.g{display:grid;grid-auto-flow:column;grid-auto-columns:1fr;width:200px}
button{height:13px;background:#b3b1b4;border:1px solid #858386;border-top-color:#ccc;padding:0}
.on{background:#9fd0e4}.r{margin-left:auto;display:flex;align-items:center}.r button{min-width:13px;flex:none}.r .x{padding:0 1px}
.sp{width:14px}.gap{width:4px}.grip{width:12px}.m{font-family:"Liberation Mono",monospace}`,
`<div class="sc"><span>比例 1:100</span>${svg('caret',9)}</div><div class="g">${Array.from({length:15},(_,i)=>`<button class="${[2,3,8,10,11].includes(i)?'on':''}" aria-label="s${i+1}">${svg('s'+(i+1),11)}</button>`).join('')}</div>
<div class="r"><button class="x">模型</button><button aria-label="布局">${svg('lay',11)}</button><button aria-label="快速查看">${svg('lay2',11)}</button><i class="sp"></i><button>${svg('ann',11)}<span class="m">1:1</span>${svg('caret',9)}</button><button aria-label="注释可见">${svg('anny',11)}</button><button aria-label="自动缩放">${svg('anng',11)}</button><i class="gap"></i><button aria-label="设置">${svg('gearw',11)}</button><button aria-label="锁定">${svg('lockw',11)}</button><button aria-label="硬件">${svg('ball',11)}</button><button class="on x">编组</button><button class="x">基线</button><button class="x">填充</button><button class="x">加粗</button><button class="x">动态标注</button><i class="gap"></i><button aria-label="性能">${svg('scr',11)}</button><button aria-label="隔离">${svg('bulb',11)}</button><i class="gap"></i>${svg('caret',8)}<button aria-label="全屏">${svg('clean',11)}</button><i class="grip"></i></div>`);

def('cad-brand',`:host{display:block;width:195px;height:98px;background:#22305a;color:#dfe0e2;overflow:hidden}
.f{display:flex;padding:16px 6px 0 7px;gap:6px}.t{flex:1;white-space:nowrap}
.a{font:500 28px/36px "Noto Sans CJK SC",sans-serif;display:flex;align-items:center}.a b{font:500 35px/36px Roboto,sans-serif;margin-right:1px}
.c{font:300 24px/24px Inter,sans-serif;margin-top:6px}`,
`<div class="f"><svg width="47" height="64" viewBox="95 508 141 192" fill="#dfe0e2"><path d="M106 532l14 4 14-2 6 9 14 16-16 2c-10 14-11 28 2 38 16 8 46 2 66 15 12 10 12 20 6 38l6 38h-13l-4-28c-6-10-14-15-26-20-12-3-24-4-36-2-6 16-8 30-7 50h-13l-3-42c-8-16-21-32-17-50 4-18 18-26 22-38l-10-12z"/><path d="M141 541c-3-8-4-14-2-22M139 539c26 14 66 14 91-15M150 540l-4-20M162 545c-8-10-6-20 0-28M176 547l-8-16 6-12M192 547l-14-16 12-6M206 541l-8-10" fill="none" stroke="#dfe0e2" stroke-width="5"/></svg><div class="t"><div class="a"><b>3D</b>溜溜网</div><div class="c">3D66.COM</div></div></div>`);

def('cad-app',`:host{box-sizing:border-box;display:flex;height:100vh;flex-direction:column;padding:2px 5px 6px;position:relative;
background:linear-gradient(#0b0c14,#0b0c14) 5px 100%/100% 6px no-repeat,linear-gradient(#dfeee8 0 60px,#b8c8d4 100px 138px,#2f9be0 140px 155px,#a9a9bd 160px 300px,#3b4450 350px 358px,#3c9fe0 360px 380px,#232a36 385px 430px,#3c9fe0 432px 448px,#262b35 455px 510px,#4c8c3c 515px 525px,#1b2028 530px) 0 0/5px 100% no-repeat,linear-gradient(#8b9480,#59604e 60px,#c5c5c8 90px,#a5a5a8 220px,#333438 260px,#202126 340px,#3a3b40 480px,#15161b) 100% 0/5px 100% no-repeat,#cfd0c8}
.mid{flex:1;display:flex;min-height:0;background:#59585a}.col{flex:1;display:flex;flex-direction:column;min-width:0}.top{flex:1;display:flex;min-height:0}
.cv{flex:1;display:flex;flex-direction:column;min-width:0}.row{flex:1;display:flex;min-height:0}
cad-command{margin-top:2px}cad-brand{position:absolute;right:39px;bottom:20px}
svg.note{position:absolute;left:0;top:0;width:100%;height:100%;pointer-events:none;z-index:9}
cad-status{margin-top:1px}`,
`<cad-title></cad-title><cad-menubar></cad-menubar><cad-tabs></cad-tabs><cad-ribbon></cad-ribbon>
<div class="mid"><cad-palette></cad-palette><div class="col"><div class="top"><cad-side side="left"></cad-side><div class="cv"><div class="row"><cad-canvas></cad-canvas><cad-vscroll></cad-vscroll></div><cad-layouts></cad-layouts></div><cad-side side="right"></cad-side></div><cad-command></cad-command></div></div>
<cad-status></cad-status><cad-brand></cad-brand>
<svg class="note"><g fill="#e0403f"><path d="M208 148L335 36l-3-4 25-4-10 20-4-5L209 150z"/><path d="M575 319L480 335l1-4-18 11 20 4-2-5 95-19z"/></g><path d="M345 337h138v15H345z" fill="none" stroke="#d9393c" stroke-width="2"/></svg>`);
</script>
</body>
</html>
